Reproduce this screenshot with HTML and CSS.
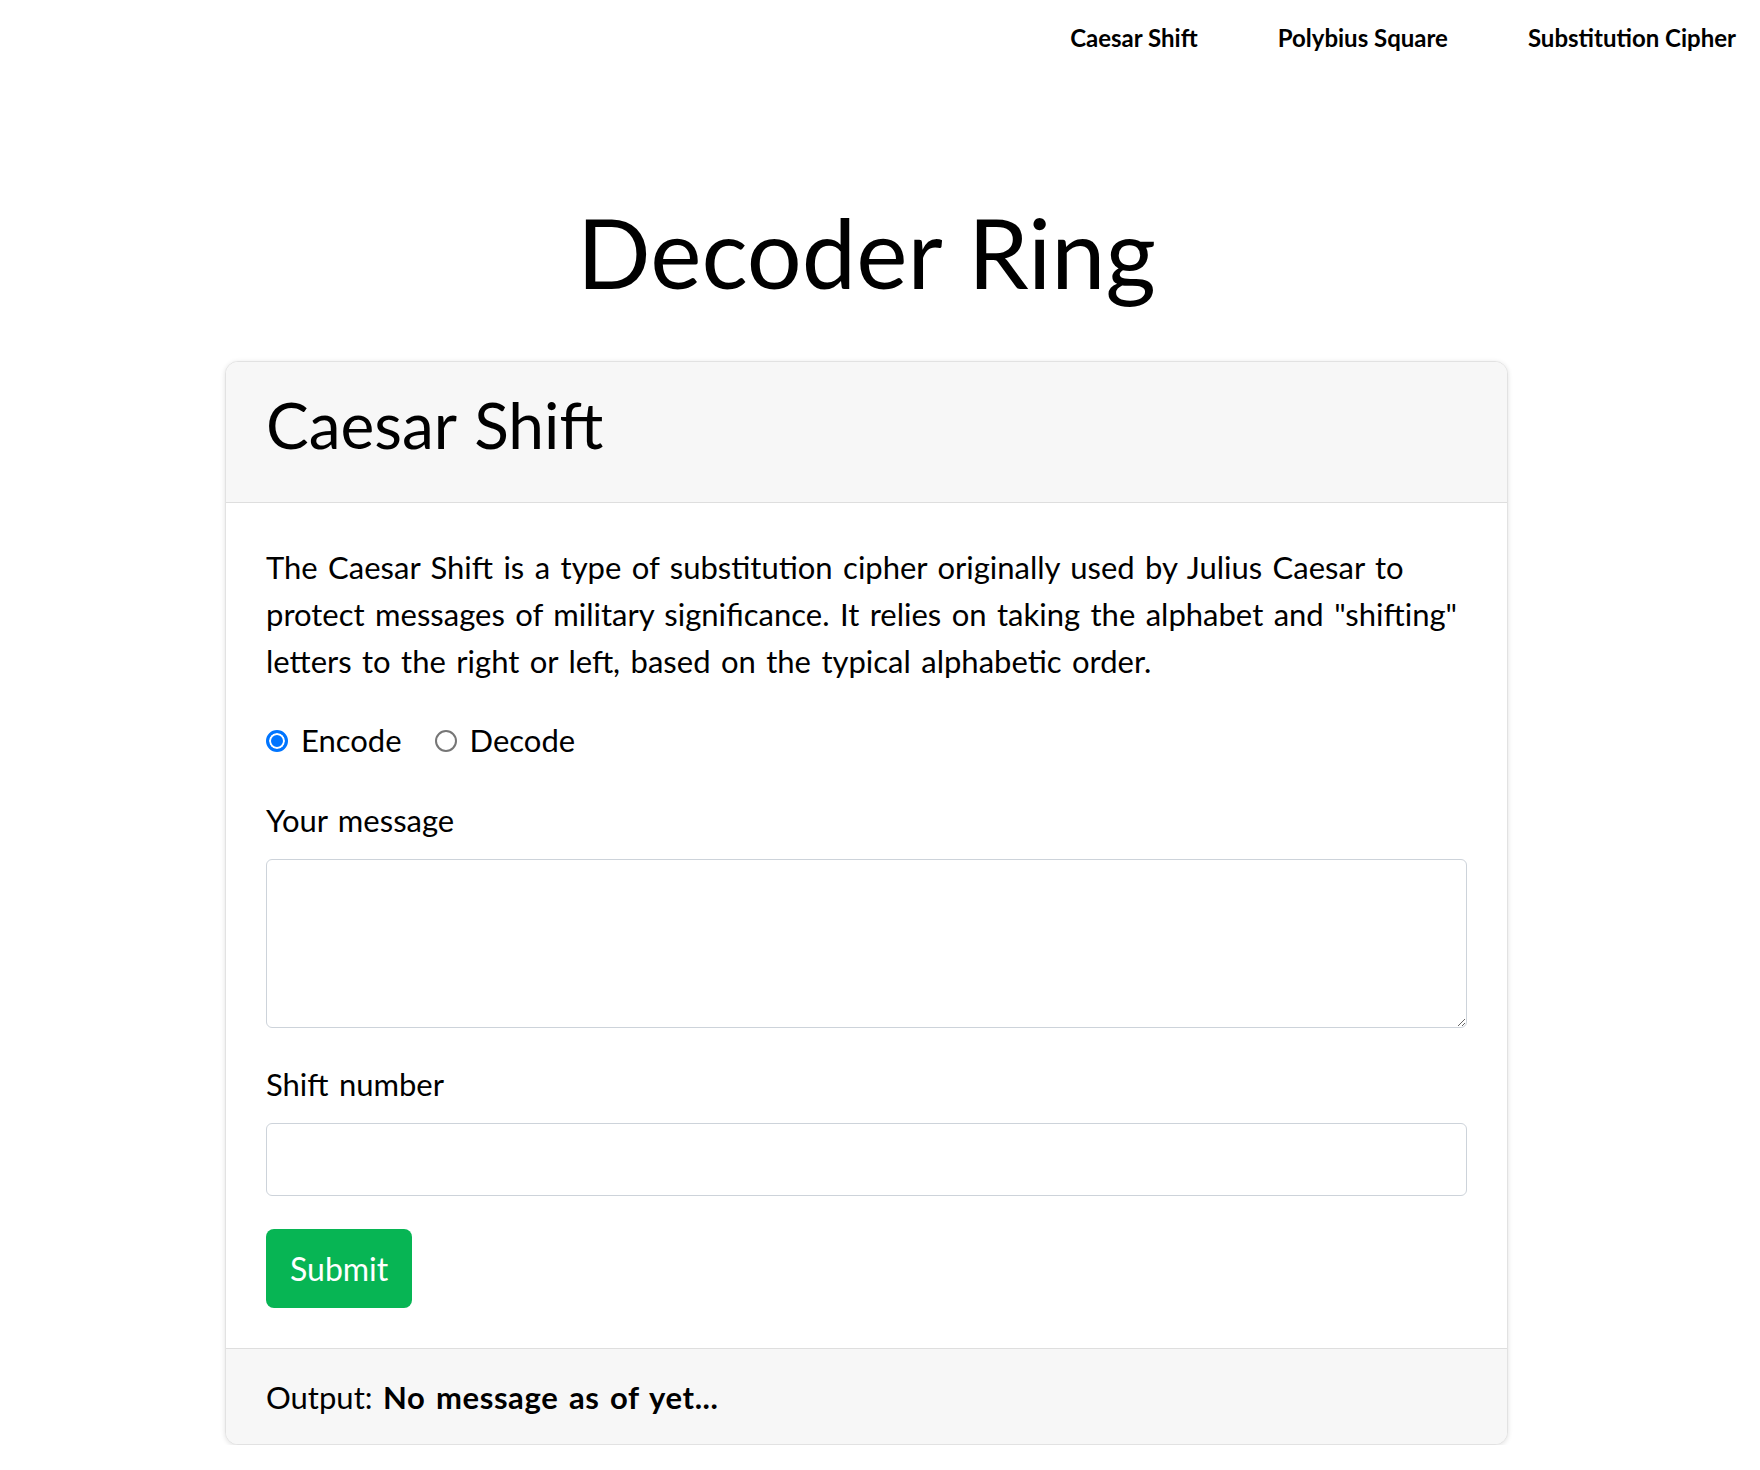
FILE: index.html
```html
<!DOCTYPE html>
<html lang="en">
<head>
<meta charset="utf-8">
<title>Decoder Ring</title>
<link rel="stylesheet" href="styles.css">
</head>
<body>
<nav class="topnav">
  <a class="topnav-link" href="#caesar">Caesar Shift</a>
  <a class="topnav-link" href="#polybius">Polybius Square</a>
  <a class="topnav-link" href="#substitution">Substitution Cipher</a>
</nav>
<div class="page">
  <main class="main">
    <h1 class="title">Decoder Ring</h1>
    <section class="card" id="caesar">
      <header class="card-header">
        <h2 class="card-title">Caesar Shift</h2>
      </header>
      <div class="card-body">
        <p class="intro">The Caesar Shift is a type of substitution cipher originally used by Julius Caesar to<br>protect messages of military significance. It relies on taking the alphabet and "shifting"<br>letters to the right or left, based on the typical alphabetic order.</p>
        <form class="cipher-form">
          <div class="radios">
            <label class="radio"><input class="radio-input" type="radio" name="mode" value="encode" checked><span>Encode</span></label>
            <label class="radio"><input class="radio-input" type="radio" name="mode" value="decode"><span>Decode</span></label>
          </div>
          <label class="field-label" for="message">Your message</label>
          <textarea class="control control-area" id="message"></textarea>
          <label class="field-label" for="shift">Shift number</label>
          <input class="control control-input" id="shift" type="number">
          <button class="btn-submit" type="button">Submit</button>
        </form>
      </div>
      <footer class="card-footer">Output: <strong class="output-value">No message as of yet...</strong></footer>
    </section>
  </main>
</div>
</body>
</html>
```
FILE: styles.css
```css
* {
  box-sizing: border-box;
}

html,
body {
  margin: 0;
  padding: 0;
  background: #ffffff;
}

body {
  font-family: Lato, "Open Sans", sans-serif;
  color: #000000;
  font-size: 31px;
  line-height: 47px;
  word-spacing: 0.08em;
}

.topnav {
  display: flex;
  justify-content: flex-end;
  gap: 80px;
  padding: 20px 24px 20px 0;
  height: 76px;
}

.topnav-link {
  font-size: 24px;
  line-height: 36px;
  font-weight: 700;
  color: #000000;
  text-decoration: none;
  word-spacing: 0;
}

.page {
  width: 1733px;
}

.main {
  width: 1283px;
  margin: 0 auto;
}

.title {
  margin: 117px 0 51px;
  font-size: 97px;
  line-height: 117px;
  font-weight: 400;
  text-align: center;
}

.card {
  border: 1px solid #e2e2e2;
  border-radius: 13px;
  overflow: hidden;
  box-shadow: 0 1px 5px rgba(0, 0, 0, 0.12);
  background: #ffffff;
}

.card-header {
  background: #f7f7f7;
  padding: 24px 40px 39px;
  border-bottom: 1px solid #dedede;
}

.card-title {
  margin: 0;
  font-size: 64px;
  line-height: 77px;
  font-weight: 400;
  word-spacing: 0.03em;
}

.card-body {
  padding: 41px 40px 40px;
}

.intro {
  margin: 0 0 32px;
}

.cipher-form {
  margin: 0;
}

.radios {
  display: flex;
  align-items: center;
  gap: 33px;
  margin-bottom: 33px;
}

.radio {
  display: flex;
  align-items: center;
  gap: 13px;
}

.radio-input {
  appearance: none;
  -webkit-appearance: none;
  margin: 0;
  width: 22px;
  height: 22px;
  border-radius: 50%;
  border: 2px solid #767676;
  background: #ffffff;
}

.radio-input:checked {
  border: 3px solid #0075ff;
  background: #0075ff;
  box-shadow: inset 0 0 0 2px #ffffff;
}

.field-label {
  display: block;
  margin-bottom: 15px;
}

.control {
  display: block;
  width: 100%;
  border: 1px solid #cdd3da;
  border-radius: 6px;
  background: #ffffff;
  font: inherit;
  padding: 12px 20px;
}

.control-area {
  height: 169px;
  margin-bottom: 33px;
}

.control-input {
  height: 73px;
  margin-top: 1px;
}

.btn-submit {
  display: block;
  margin-top: 33px;
  height: 79px;
  padding: 0 24px;
  border: none;
  border-radius: 8px;
  background: #07b554;
  color: #ffffff;
  font-family: inherit;
  font-size: 32px;
  line-height: 47px;
}

.card-footer {
  background: #f7f7f7;
  border-top: 1px solid #dedede;
  padding: 25px 40px 23px;
}

.output-value {
  font-weight: 700;
  letter-spacing: 0.6px;
}
```
